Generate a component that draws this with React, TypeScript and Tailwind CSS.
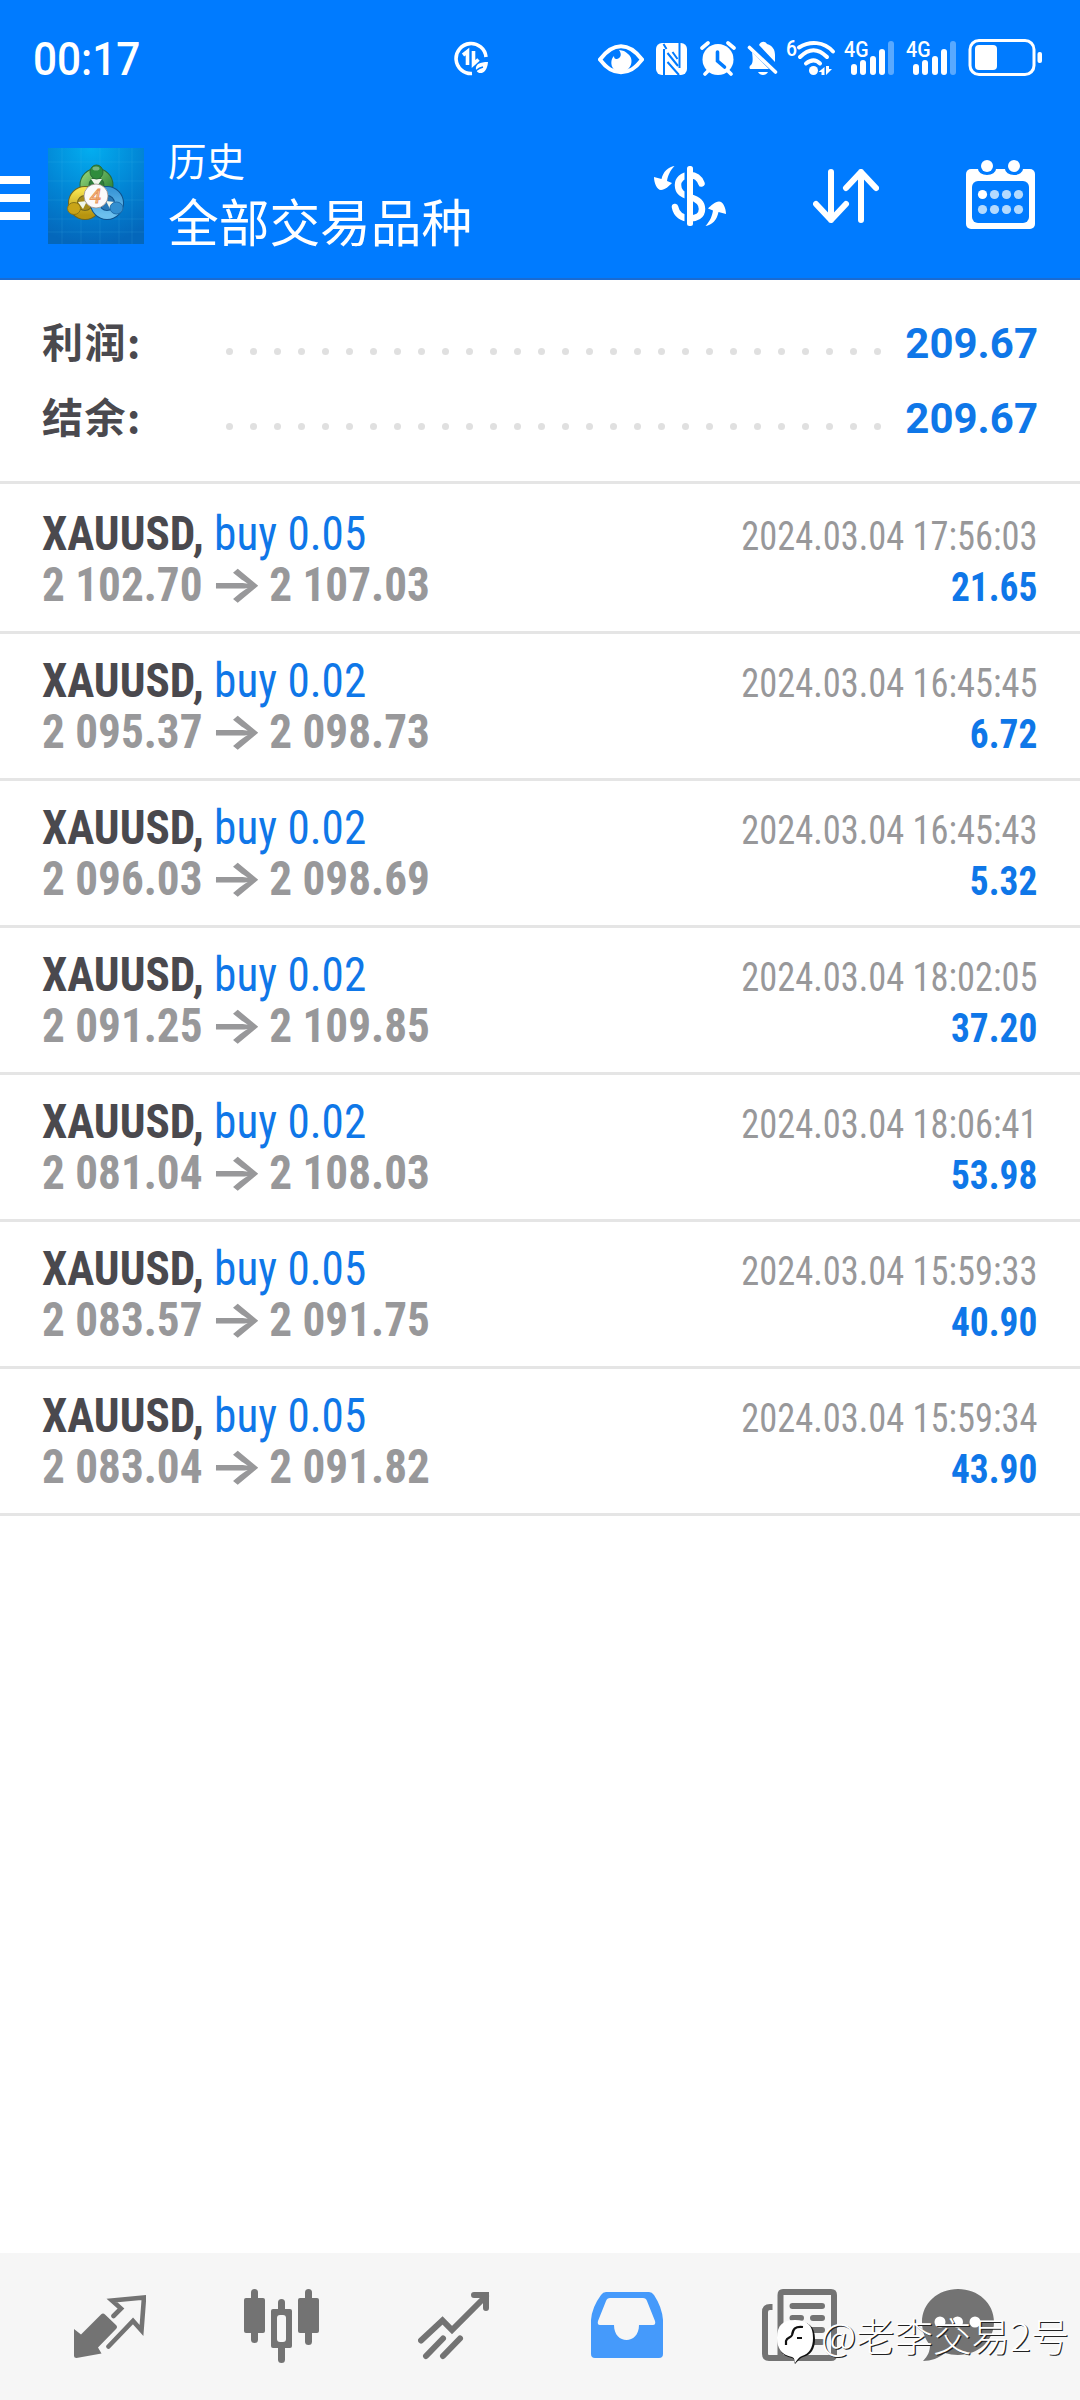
import React from 'react';

type Deal = {
  volume: string;
  open: string;
  close: string;
  time: string;
  profit: string;
};

const deals: Deal[] = [
  { volume: '0.05', open: '2 102.70', close: '2 107.03', time: '2024.03.04 17:56:03', profit: '21.65' },
  { volume: '0.02', open: '2 095.37', close: '2 098.73', time: '2024.03.04 16:45:45', profit: '6.72' },
  { volume: '0.02', open: '2 096.03', close: '2 098.69', time: '2024.03.04 16:45:43', profit: '5.32' },
  { volume: '0.02', open: '2 091.25', close: '2 109.85', time: '2024.03.04 18:02:05', profit: '37.20' },
  { volume: '0.02', open: '2 081.04', close: '2 108.03', time: '2024.03.04 18:06:41', profit: '53.98' },
  { volume: '0.05', open: '2 083.57', close: '2 091.75', time: '2024.03.04 15:59:33', profit: '40.90' },
  { volume: '0.05', open: '2 083.04', close: '2 091.82', time: '2024.03.04 15:59:34', profit: '43.90' },
];

const summary = [
  { label: '利润:', value: '209.67' },
  { label: '结余:', value: '209.67' },
];

const Signal: React.FC<{ className?: string }> = ({ className }) => (
  <svg width="52" height="38" viewBox="0 0 52 38" fill="white" overflow="visible" className={className}>
    <text x="0" y="19" fontSize="22.500" fontWeight="500" textLength="24.500" lengthAdjust="spacingAndGlyphs" className="font-['Roboto']">4G</text>
    <rect x="7" y="26" width="6" height="11" rx="3" />
    <rect x="16" y="22" width="6" height="15" rx="3" />
    <rect x="26" y="18" width="6" height="19" rx="3" />
    <rect x="35" y="11" width="6" height="26" rx="3" />
    <rect x="44" y="3" width="6" height="34" rx="3" opacity="0.35" />
  </svg>
);

const StatusBar: React.FC = () => (
  <div className="flex h-[116px] items-start pt-[38px] pl-[33px] text-white">
    <div className="w-[421px]">
      <span className="inline-block origin-left scale-x-[0.92] text-[46px] leading-[43px] font-medium">00:17</span>
    </div>
    <svg width="34" height="38" viewBox="0 0 34 38" fill="none" stroke="white" className="shrink-0">
      <path d="M18 35.500A15 15 0 1 1 32 19" strokeWidth="3.600" />
      <path d="M9 17l4.500-3.500V27M19.500 13V26l5-4.500" strokeWidth="3.600" />
      <path d="M34 24c-8 0-13 2-12 8 2 5 11 5 12-8z" fill="white" stroke="none" />
      <path d="M20 37c1-5 5-7 9-8" stroke="#007bff" strokeWidth="1.500" />
    </svg>

    {/* eye comfort */}
    <svg width="46" height="38" viewBox="0 0 46 38" className="ml-[110px] shrink-0">
      <path d="M2 21.500C9 12 15 8.200 23 8.200S37 12 44 21.500C37 31 31 34.200 23 34.200S9 31 2 21.500z" fill="none" stroke="white" strokeWidth="4" />
      <path d="M21 12c3 4 2 8-2 9-2 .5-3-1-3-3-5 5-3 16 7 16s14-13 7-18c-3-3-5-3.500-9-4z" fill="white" />
    </svg>
    {/* nfc */}
    <svg width="31" height="38" viewBox="0 0 31 38" className="ml-3 shrink-0">
      <rect x="0" y="5" width="31" height="32" rx="6" fill="white" />
      <path d="M8 11v26M23.500 5v25" stroke="#007bff" strokeWidth="2" fill="none" />
      <path d="M7.500 6l3 5M11.500 15L22 28M11.500 24L23 37M16.500 14l5 7" stroke="#007bff" strokeWidth="2" fill="none" />
    </svg>
    {/* alarm */}
    <svg width="36" height="38" viewBox="0 0 36 38" className="ml-[13px] shrink-0">
      <circle cx="18" cy="21.500" r="15.500" fill="white" />
      <path d="M2 10l6-5M34 10l-6-5M5 36l5-5M31 36l-5-5" stroke="white" strokeWidth="3.600" strokeLinecap="round" />
      <path d="M17.500 14v9l7 6" fill="none" stroke="#007bff" strokeWidth="3.600" strokeLinecap="round" />
    </svg>
    {/* muted bell */}
    <svg width="31" height="38" viewBox="0 0 31 38" fill="white" className="ml-[11px] shrink-0">
      <path d="M12 7c2-4 6-4 8-1 6 2 8 6 8 11v7z" />
      <path d="M5 14l17 17H4c-2 0-2-3 0-4 2-2 2-6 1-13zM11 34h10c-2 4-8 4-10 0z" />
      <path d="M2.500 9.500L28.500 34" stroke="white" strokeWidth="3.600" strokeLinecap="round" />
    </svg>
    {/* wifi 6 */}
    <svg width="50" height="38" viewBox="0 0 50 38" fill="none" overflow="visible" className="ml-[8px] shrink-0">
      <text x="0" y="17.500" fontSize="22" fontWeight="500" fill="white" textLength="11" lengthAdjust="spacingAndGlyphs" className="font-['Roboto']">6</text>
      <path d="M13 9.500c11-7 25-6 34 4M14 19c9-9 18-9 27 0M20 25.500c5-4 10-4 14 0" stroke="white" strokeWidth="4" strokeLinecap="round" />
      <circle cx="27.500" cy="32.500" r="4.500" fill="white" />
      <path d="M32.500 34l6-5v8h-3v-3zM40 28v9l6-6h-3v-3z" fill="white" />
    </svg>
    <Signal className="ml-[8px] shrink-0" />
    <Signal className="ml-[10px] shrink-0" />
    <svg width="74" height="40" viewBox="0 0 74 40" className="ml-[10px] shrink-0">
      <rect x="2" y="2.500" width="64" height="34" rx="9" fill="none" stroke="white" strokeWidth="3" />
      <rect x="7" y="7" width="22" height="25" rx="4" fill="white" />
      <rect x="69.500" y="14" width="4.500" height="11" rx="2" fill="white" />
    </svg>
  </div>
);

const AppLogo: React.FC = () => (
  <svg width="96" height="96" viewBox="0 0 96 96" className="ml-[18px] shrink-0">
    <defs>
      <radialGradient id="sky" cx="0.45" cy="0" r="1">
        <stop offset="0" stopColor="#03aef0" />
        <stop offset="0.55" stopColor="#0284d4" />
        <stop offset="1" stopColor="#0467bb" />
      </radialGradient>
      <linearGradient id="green" x1="0" y1="0" x2="1" y2="1">
        <stop offset="0" stopColor="#8ccf74" />
        <stop offset="1" stopColor="#237c33" />
      </linearGradient>
      <linearGradient id="yellow" x1="0" y1="0" x2="0" y2="1">
        <stop offset="0" stopColor="#f4e04e" />
        <stop offset="1" stopColor="#b7940f" />
      </linearGradient>
      <linearGradient id="blue" x1="0" y1="0" x2="0" y2="1">
        <stop offset="0" stopColor="#3b98d8" />
        <stop offset="1" stopColor="#6cc0ee" />
      </linearGradient>
    </defs>
    <rect width="96" height="96" fill="url(#sky)" />
    <path d="M0 14h96M0 33h96M0 52h96M0 71h96M0 84h96M14 0v96M33 0v96M52 0v96M71 0v96M84 0v96" stroke="#5cc4f5" strokeOpacity="0.14" />
    <circle cx="48.500" cy="37" r="12" fill="#2f7d3b" stroke="#2a6b37" strokeWidth="10" />
    <circle cx="48.500" cy="37" r="12" fill="none" stroke="url(#green)" strokeWidth="8" />
    <circle cx="37" cy="55" r="12" fill="#a58b1a" stroke="#73661a" strokeWidth="10" />
    <circle cx="37" cy="55" r="12" fill="none" stroke="url(#yellow)" strokeWidth="8" />
    <circle cx="59" cy="55" r="12" fill="#2877b5" stroke="#0f528c" strokeWidth="10" />
    <circle cx="59" cy="55" r="12" fill="none" stroke="url(#blue)" strokeWidth="8" />
    <path d="M43 31h11l-5.500 8zM30 54l9-1-4 8zM67 54l-9-1 4 8z" fill="#eef6ea" />
    <ellipse cx="48.500" cy="24" rx="6.500" ry="7" fill="#2f8c3c" stroke="#2a6b37" />
    <ellipse cx="26" cy="60.500" rx="6.500" ry="6" fill="#c9a418" stroke="#8a7616" />
    <ellipse cx="68.500" cy="60" rx="6.500" ry="6" fill="#338fd0" stroke="#1f6dab" />
    <ellipse cx="48" cy="20.500" rx="3.500" ry="2" fill="white" opacity="0.35" />
    <circle cx="48" cy="48" r="12" fill="#fbfafa" stroke="#9b8f8a" strokeWidth="0.800" />
    <text x="47.500" y="55" textAnchor="middle" fontSize="20" fontStyle="italic" fill="#fbd9a5" stroke="#e8955a" strokeWidth="1" className="font-['Roboto']">4</text>
  </svg>
);

const Header: React.FC = () => (
  <div className="flex h-[164px] items-start border-b-2 border-[#1a6bd2] text-white">
    <div className="mt-[60px] flex w-[30px] shrink-0 flex-col gap-[10px]">
      <div className="h-2 bg-white" />
      <div className="h-2 bg-white" />
      <div className="h-2 bg-white" />
    </div>
    <div className="mt-8">
      <AppLogo />
    </div>
    <div className="ml-6 w-[486px] pt-[22px] font-['Roboto','Noto_Sans_CJK_SC',sans-serif] whitespace-nowrap">
      <div className="text-[38.5px] leading-[50px]">历史</div>
      <div className="mt-[3px] text-[50.7px] leading-[68px]">全部交易品种</div>
    </div>
    {/* trade operations */}
    <svg width="72" height="62" viewBox="0 0 72 62" className="mt-[49px] shrink-0">
      <path d="M47.500 18.500C45 12 40 10 36 10c-8 0-12 5-12 10 0 9 7 10 12 12 7 2 12 6 12 12 0 7-6 9.500-12 9.500-8 0-13.500-4-15-11.500" fill="none" stroke="white" strokeWidth="6.500" strokeLinecap="round" />
      <path d="M30.500 0h2.500v62h-2.500z" fill="#007bff" />
      <rect x="33" y="1" width="6" height="60" rx="2.500" fill="white" />
      <path d="M20.500 1C14 2 9 7 7.500 14L0 12c0 6 3 13 7 13s8-4 11-7l-5-2c1-6 3-10 7.500-15zM51.500 61C58 60 63 55 64.500 47l7.500 2c0-6-3-12.500-7-12.500s-8 4-11 7l5 2c-1 6-3 10.500-7.500 15.500z" fill="white" />
    </svg>
    <svg width="66" height="54" viewBox="0 0 66 54" fill="none" stroke="white" strokeWidth="6" strokeLinecap="round" strokeLinejoin="round" className="mt-[53px] ml-[87px] shrink-0">
      <path d="M18 3v48M3 35l15 16 15-16M48 51V3M33 19L48 3l15 16" />
    </svg>
    <svg width="69" height="70" viewBox="0 0 69 70" className="mt-[44px] ml-[87px] shrink-0">
      <rect y="9" width="69" height="60" rx="5" fill="white" />
      <rect x="6" y="21" width="57" height="42" rx="6" fill="#007bff" />
      <path d="M12 9a9 6 0 0 0 18 0zM39 9a9 6 0 0 0 18 0z" fill="#007bff" />
      <g fill="white">
        <circle cx="21" cy="6" r="6" />
        <circle cx="48" cy="6" r="6" />
        <circle cx="16.500" cy="34.500" r="4.600" />
      </g>
      <g fill="#b3dafe">
        <circle cx="28.500" cy="34.500" r="4.600" />
        <circle cx="40.500" cy="34.500" r="4.600" />
        <circle cx="52.500" cy="34.500" r="4.600" />
        <circle cx="16.500" cy="49.500" r="4.600" />
        <circle cx="28.500" cy="49.500" r="4.600" />
        <circle cx="40.500" cy="49.500" r="4.600" />
        <circle cx="52.500" cy="49.500" r="4.600" />
      </g>
    </svg>
  </div>
);

const Summary: React.FC = () => (
  <div className="h-[204px] border-b-3 border-[#e5e5e5] pt-[26px] pr-[42px] pl-[42px]">
    {summary.map((row) => (
      <div key={row.label} className="flex h-[75px] items-center font-bold">
        <span className="mb-[6px] w-[184px] font-['Noto_Sans_CJK_SC',sans-serif] text-[41px] tracking-[1.5px] text-[#4a494e]">{row.label}</span>
        <div className="mt-4 flex flex-1 gap-[17px]">
          {Array.from({ length: 28 }, (_, i) => (
            <div key={i} className="size-[7px] rounded-full bg-[#e0e0e0]" />
          ))}
        </div>
        <span className="text-[42px] text-[#0f77e8]">{row.value}</span>
      </div>
    ))}
  </div>
);

const DealRow: React.FC<{ deal: Deal }> = ({ deal }) => (
  <div className="flex h-[147px] justify-between border-b-3 border-[#e5e5e5] pt-[21px] pr-[43px] pl-[42px] font-['Roboto_Condensed','Roboto',sans-serif] whitespace-nowrap [font-stretch:75%]">
    <div className="origin-left scale-x-[0.941] text-[48px] leading-[51px]">
      <div>
        <span className="font-bold text-[#4a494e]">XAUUSD, </span>
        <span className="text-[#0f77e8]">buy {deal.volume}</span>
      </div>
      <div className="flex h-[51px] font-bold text-[#98989a]">
        <span>{deal.open}</span>
        <span className="w-[71px] scale-x-[1.28] text-center font-['Inter'] text-[48px] leading-[49px] font-bold">→</span>
        <span>{deal.close}</span>
      </div>
    </div>
    <div className="pt-[3px] text-right text-[40px] leading-[51px]">
      <div className="origin-right scale-x-[0.91] text-[#98989a]">{deal.time}</div>
      <div className="origin-right scale-x-[0.935] font-bold text-[#0f77e8]">{deal.profit}</div>
    </div>
  </div>
);

const TabBar: React.FC = () => (
  <div className="relative flex h-[147px] items-start bg-[#f6f6f6] pl-[74px]">
    <svg width="72" height="64" viewBox="0 0 72 64" fill="#737373" className="mt-[42px] shrink-0">
      <path d="M0 34l7 5.500L27 19.500q2-2 4 0L42 30q2 2 0 4L24 52.500l3.500 6L2.500 63Q0 63 0 61z" />
      <path d="M39.500 21l7.500-7.500-9-8 32-3-2.500 33L59 26 34.500 51.500" fill="none" stroke="#737373" strokeWidth="4.600" strokeLinecap="round" />
    </svg>
    <svg width="75" height="75" viewBox="0 0 75 75" fill="#737373" className="mt-9 ml-[98px] shrink-0">
      <rect x="7" width="7" height="54" rx="3.500" />
      <rect y="9" width="21" height="35" rx="2" />
      <rect x="34" y="10" width="7" height="64" rx="3.500" />
      <rect x="27" y="20" width="21" height="39" rx="2" />
      <rect x="33" y="26" width="9" height="27" rx="3" fill="#f6f6f6" />
      <rect x="61" width="7" height="56" rx="3.500" />
      <rect x="54" y="9" width="21" height="35" rx="2" />
    </svg>
    <svg width="72" height="68" viewBox="0 0 72 68" fill="none" stroke="#737373" strokeWidth="6" strokeLinecap="round" className="mt-[39px] ml-[99px] shrink-0">
      <path d="M3 48.500l21.500-20 9.500 9.500L68 4M56 3h12v13M8 64l17-17.500M25 64l17-17.500" />
    </svg>
    <svg width="73" height="67" viewBox="0 0 73 67" className="mt-[39px] ml-[101px] shrink-0">
      <path fillRule="evenodd" fill="#459afb" d="M15 0h43q3 0 5 3 8 12 9 25v34q0 4-4 4H4q-4 0-4-4V28Q1 15 10 3q2-3 5-3zM19 6q-3 0-4 3L7 29q-1 4 2 4h14c0 20 25 20 25 0h14q3 0 2-4L56 9q-1-3-4-3z" />
    </svg>
    <svg width="75" height="72" viewBox="0 0 75 72" fill="none" stroke="#737373" strokeWidth="6" className="mt-9 ml-[98px] shrink-0">
      <path d="M10.500 18H8q-5 0-5 5v42q0 4 4 4h62q3 0 3-3V6q0-3-3-3H21q-2.500 0-2.500 3v60" />
      <path d="M30.500 17H60M30.500 29H39M51 29h9M30.500 41H60M30.500 53H60" strokeLinecap="round" />
    </svg>
    <svg width="73" height="73" viewBox="0 0 73 73" className="mt-9 ml-[85px] shrink-0">
      <path d="M36 0c20 0 36 14 36 33S56 66 36 66c-5 0-9-1-13-2-6 5-14 8-22 8 5-5 7-10 7-16C3 50 0 42 0 33 0 14 16 0 36 0z" fill="#737373" />
      <g fill="white">
        <circle cx="18" cy="33" r="5.500" />
        <circle cx="35.500" cy="33" r="5.500" />
        <circle cx="53" cy="33" r="5.500" />
      </g>
    </svg>

    {/* author tag over the last two tabs */}
    <div className="absolute top-[57px] left-[777px] flex items-start whitespace-nowrap">
      <svg width="40" height="46" viewBox="0 0 40 46" className="mt-[9px] shrink-0">
        <path d="M19 2c12 0 19 5 19 18 0 10-4 16-12 18-3 1-5 4-8 7-1-3 0-5-3-6C5 37 1 31 1 20 1 7 7 2 19 2z" fill="#111" />
        <path d="M18 1c12 0 18 5 18 18 0 10-4 16-11 18-3 1-5 4-7 7-1-3 0-5-3-6C5 36 0 30 0 19 0 6 6 1 18 1z" fill="white" />
        <path d="M26 8c-8-1-10 2-11 8-1 3-5 2-6 6v4M20 19h5" fill="none" stroke="#111" strokeWidth="2.200" />
      </svg>
      <span className="ml-[4px] font-['Noto_Sans_CJK_SC',sans-serif] text-[38.5px] leading-[48px] font-light text-white [text-shadow:1.2px_1.2px_0_#222]">@老李交易2号</span>
    </div>
  </div>
);

export default function App() {
  return (
    <div className="flex h-[2400px] w-[1080px] flex-col overflow-hidden bg-white font-['Roboto','Noto_Sans_CJK_SC',sans-serif]">
      <div className="bg-[#007bff]">
        <StatusBar />
        <Header />
      </div>
      <Summary />
      <div className="flex-1 pt-[3px]">
        {deals.map((deal) => (
          <DealRow key={deal.time} deal={deal} />
        ))}
      </div>
      <TabBar />
    </div>
  );
}
